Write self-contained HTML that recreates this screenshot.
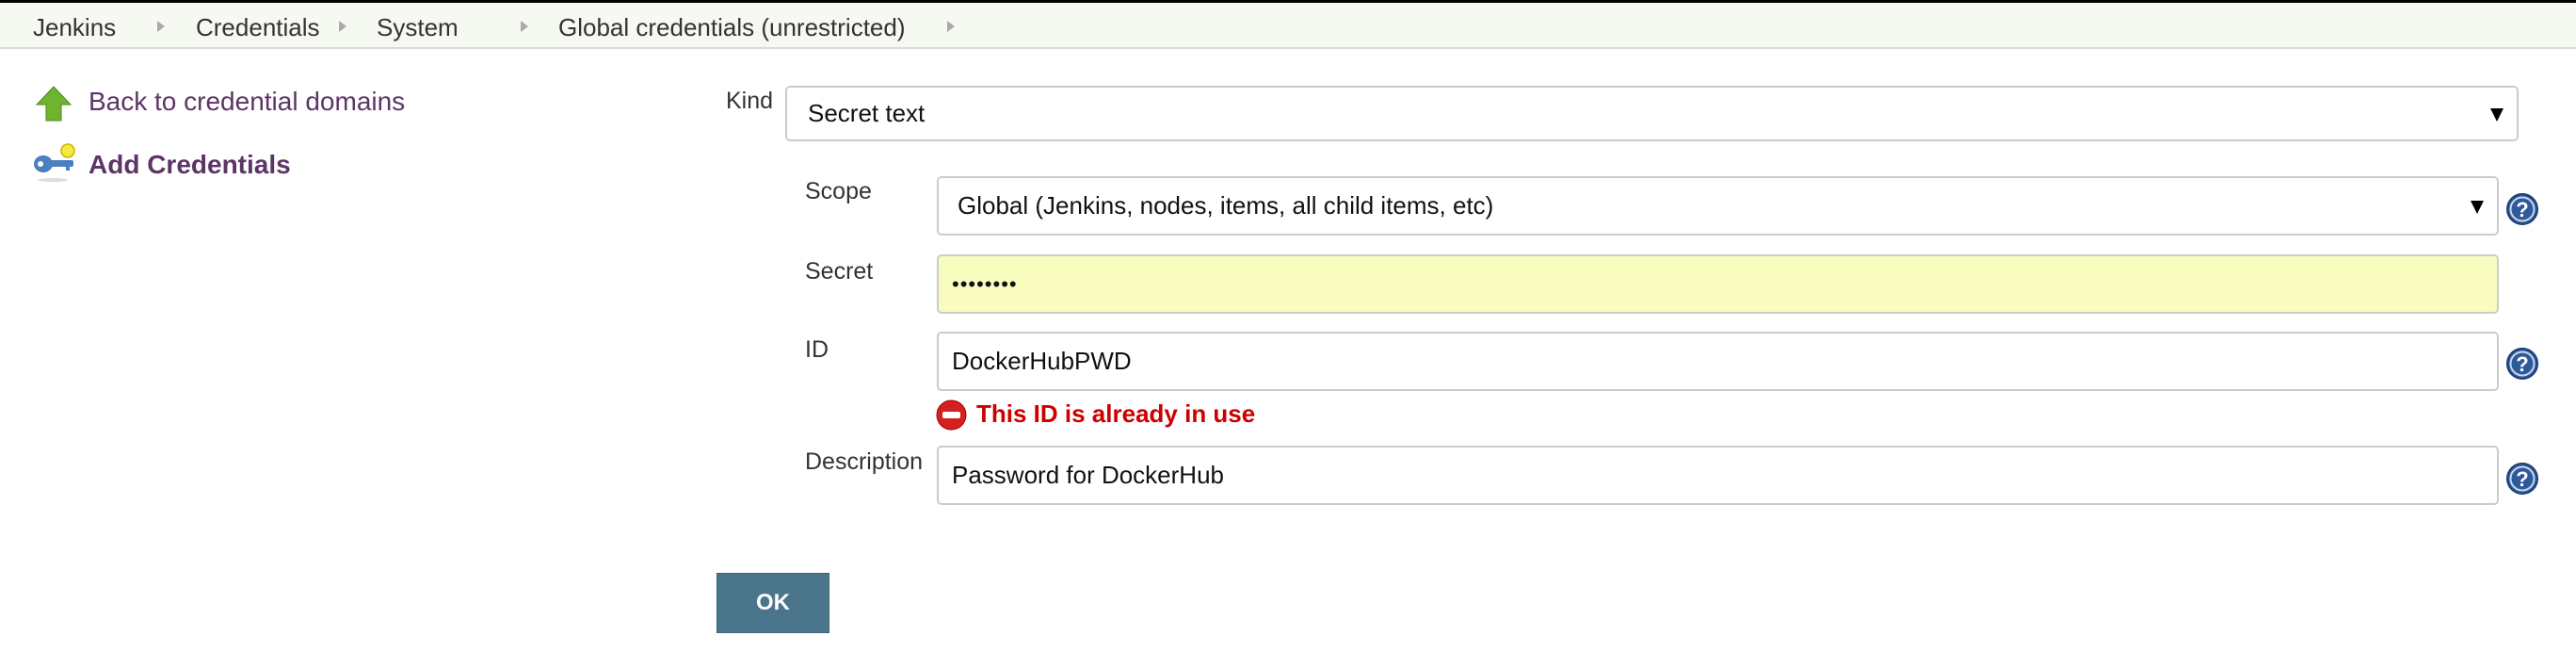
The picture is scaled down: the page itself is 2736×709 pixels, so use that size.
<!DOCTYPE html>
<html><head><meta charset="utf-8"><style>
*{box-sizing:border-box;margin:0;padding:0}
body{width:2736px;height:709px;background:#fff;font-family:"Liberation Sans",Arial,sans-serif;position:relative;overflow:hidden;color:#333}
.top{position:absolute;left:0;top:0;width:2736px;height:3px;background:#000}
.bc{position:absolute;left:0;top:3px;width:2736px;height:49px;background:#f6f8f2;border-bottom:2px solid #d8dad4}
.bc span{position:absolute;top:11px;font-size:26px;color:#333}
.bc i{position:absolute;top:19px;width:0;height:0;border-left:8px solid #aaa;border-top:6px solid transparent;border-bottom:6px solid transparent}
.a{position:absolute;font-size:28px}
.lbl{position:absolute;font-size:25px;color:#333}
.f{position:absolute;border:2px solid #ccc;border-radius:5px;background:#fff;font-size:26px;color:#111;padding-left:18px;display:flex;align-items:center}
.arr{position:absolute;right:14px;top:50%;margin-top:-6px;border-top:14px solid #000;border-left:7px solid transparent;border-right:7px solid transparent}
.h{position:absolute;width:36px;height:36px}
</style></head><body>
<div class="top"></div>
<div class="bc">
<span style="left:35px">Jenkins</span><i style="left:167px"></i>
<span style="left:208px">Credentials</span><i style="left:360px"></i>
<span style="left:400px">System</span><i style="left:553px"></i>
<span style="left:593px">Global credentials (unrestricted)</span><i style="left:1006px"></i>
</div>
<svg style="position:absolute;left:36px;top:90px" width="42" height="42" viewBox="0 0 42 42"><path d="M21 2 L39 21 L29 21 L29 38 L13 38 L13 21 L3 21 Z" fill="#6fb42c" stroke="#4a8a1a" stroke-width="1"/></svg>
<div class="a" style="left:94px;top:92px;color:#5c3566">Back to credential domains</div>
<svg style="position:absolute;left:34px;top:150px" width="50" height="46" viewBox="0 0 50 46"><circle cx="38" cy="10" r="7" fill="#f4e842" stroke="#c9b800" stroke-width="1.5"/><ellipse cx="12" cy="24" rx="10" ry="9" fill="#4a7fc0"/><circle cx="9" cy="24" r="3" fill="#fff"/><rect x="18" y="20" width="26" height="7" rx="2" fill="#4a7fc0"/><rect x="36" y="26" width="4" height="5" fill="#4a7fc0"/><ellipse cx="22" cy="41" rx="16" ry="2" fill="#ddd"/></svg>
<div class="a" style="left:94px;top:159px;color:#5c3566;font-weight:bold">Add Credentials</div>

<div class="lbl" style="left:771px;top:93px">Kind</div>
<div class="f" style="left:834px;top:91px;width:1841px;height:59px;padding-left:22px">Secret text<div class="arr"></div></div>

<div class="lbl" style="left:855px;top:189px">Scope</div>
<div class="f" style="left:995px;top:187px;width:1659px;height:63px;padding-left:20px">Global (Jenkins, nodes, items, all child items, etc)<div class="arr"></div></div>

<div class="lbl" style="left:855px;top:274px">Secret</div>
<div class="f" style="left:995px;top:270px;width:1659px;height:63px;background:#f8fcbe;font-size:22px;letter-spacing:1px;padding-left:14px">••••••••</div>

<div class="lbl" style="left:855px;top:357px">ID</div>
<div class="f" style="left:995px;top:352px;width:1659px;height:63px;padding-left:14px">DockerHubPWD</div>

<svg style="position:absolute;left:994px;top:424px" width="33" height="33" viewBox="0 0 33 33"><circle cx="16.5" cy="16.5" r="15.5" fill="#d42020" stroke="#a00" stroke-width="1"/><rect x="7" y="13" width="19" height="7" rx="2" fill="#fff"/></svg>
<div class="a" style="left:1037px;top:424px;color:#cc0000;font-weight:bold;font-size:26px">This ID is already in use</div>

<div class="lbl" style="left:855px;top:476px">Description</div>
<div class="f" style="left:995px;top:473px;width:1659px;height:63px;padding-left:14px">Password for DockerHub</div>

<svg class="h" style="left:2661px;top:204px" viewBox="0 0 36 36"><circle cx="18" cy="18" r="16" fill="#2f5a9a" stroke="#1d3f75" stroke-width="2"/><circle cx="18" cy="18" r="12.5" fill="none" stroke="#c9d8ee" stroke-width="2"/><text x="18" y="26" text-anchor="middle" font-family="Liberation Sans" font-weight="bold" font-size="22" fill="#fff">?</text></svg>
<svg class="h" style="left:2661px;top:368px" viewBox="0 0 36 36"><circle cx="18" cy="18" r="16" fill="#2f5a9a" stroke="#1d3f75" stroke-width="2"/><circle cx="18" cy="18" r="12.5" fill="none" stroke="#c9d8ee" stroke-width="2"/><text x="18" y="26" text-anchor="middle" font-family="Liberation Sans" font-weight="bold" font-size="22" fill="#fff">?</text></svg>
<svg class="h" style="left:2661px;top:490px" viewBox="0 0 36 36"><circle cx="18" cy="18" r="16" fill="#2f5a9a" stroke="#1d3f75" stroke-width="2"/><circle cx="18" cy="18" r="12.5" fill="none" stroke="#c9d8ee" stroke-width="2"/><text x="18" y="26" text-anchor="middle" font-family="Liberation Sans" font-weight="bold" font-size="22" fill="#fff">?</text></svg>

<div style="position:absolute;left:761px;top:608px;width:120px;height:64px;background:#4b758b;color:#fff;font-weight:bold;font-size:24px;display:flex;align-items:center;justify-content:center;border:1px solid #3f6577">OK</div>
</body></html>
